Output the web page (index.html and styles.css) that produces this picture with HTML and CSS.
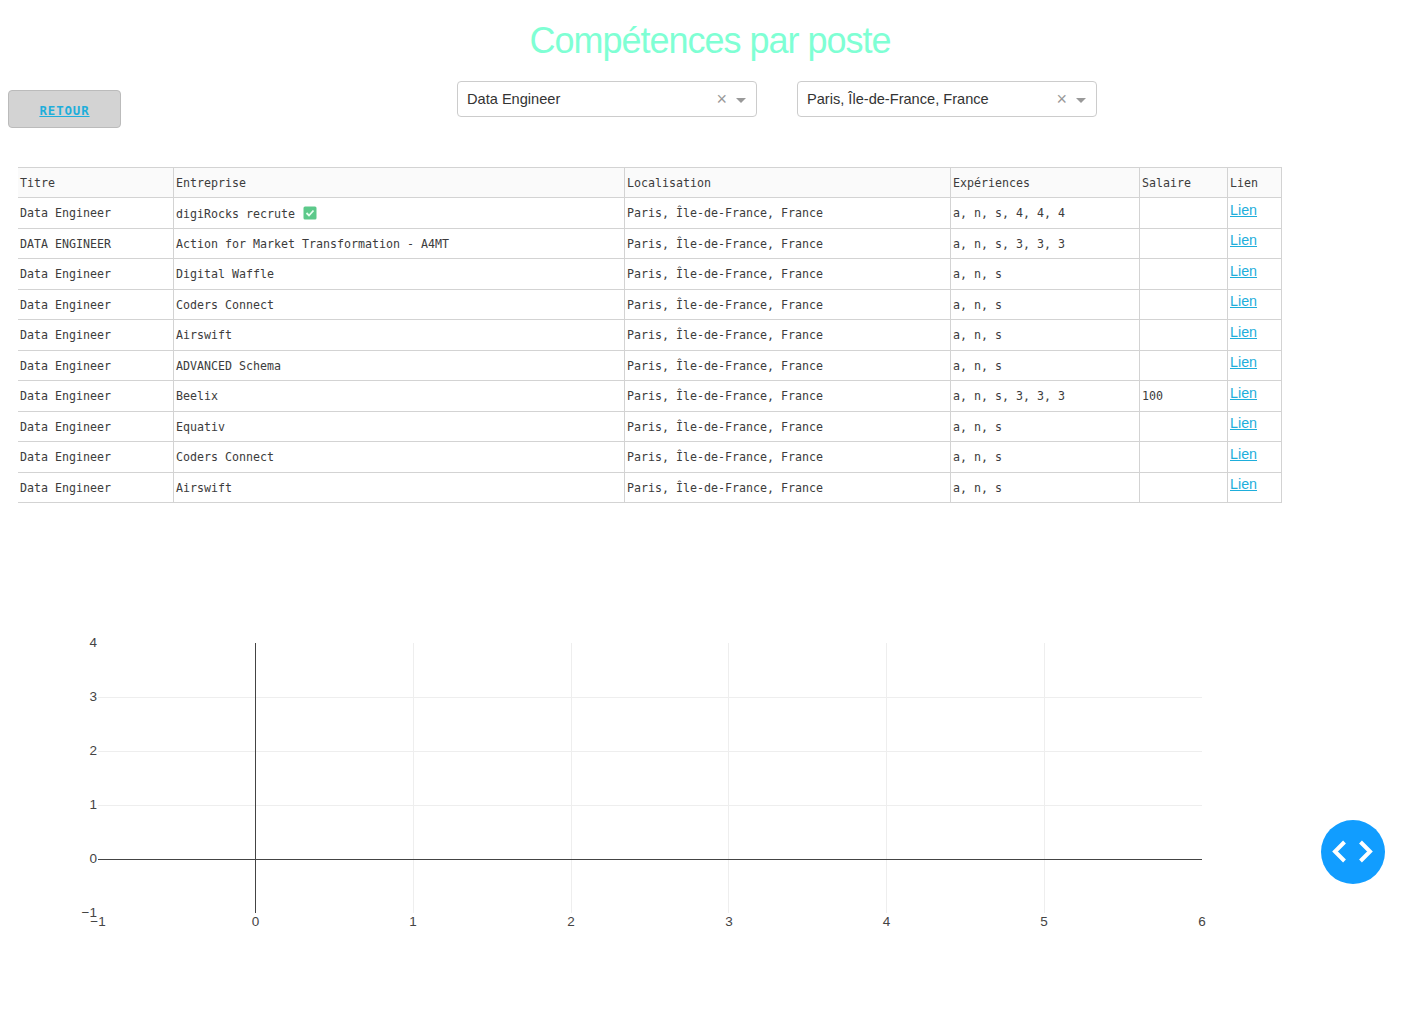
FILE: index.html
```html
<!DOCTYPE html>
<html lang="fr">
<head>
<meta charset="utf-8">
<title>Compétences par poste</title>
<link rel="stylesheet" href="styles.css">
</head>
<body>
<h1 class="title">Compétences par poste</h1>
<div class="controls">
  <a class="back" href="#">RETOUR</a>
  <div class="select select-first"><span class="select-value">Data Engineer</span><span class="clear">×</span><span class="caret"></span></div>
  <div class="select select-second"><span class="select-value">Paris, Île-de-France, France</span><span class="clear">×</span><span class="caret"></span></div>
</div>
<table class="jobs">
  <colgroup><col class="c1"><col class="c2"><col class="c3"><col class="c4"><col class="c5"><col class="c6"></colgroup>
  <thead><tr><th>Titre</th><th>Entreprise</th><th>Localisation</th><th>Expériences</th><th>Salaire</th><th>Lien</th></tr></thead>
  <tbody>
    <tr><td>Data Engineer</td><td>digiRocks recrute <svg class="check" viewBox="0 0 14 14" width="14" height="14"><rect width="13" height="13" x="0.5" y="0.5" rx="1.5" fill="#5cc98a"/><path d="M3.5 7l2.5 2.5 4.5-5" fill="none" stroke="#e8fff0" stroke-width="1.8"/></svg></td><td>Paris, Île-de-France, France</td><td>a, n, s, 4, 4, 4</td><td></td><td><a href="#">Lien</a></td></tr>
    <tr><td>DATA ENGINEER</td><td>Action for Market Transformation - A4MT</td><td>Paris, Île-de-France, France</td><td>a, n, s, 3, 3, 3</td><td></td><td><a href="#">Lien</a></td></tr>
    <tr><td>Data Engineer</td><td>Digital Waffle</td><td>Paris, Île-de-France, France</td><td>a, n, s</td><td></td><td><a href="#">Lien</a></td></tr>
    <tr><td>Data Engineer</td><td>Coders Connect</td><td>Paris, Île-de-France, France</td><td>a, n, s</td><td></td><td><a href="#">Lien</a></td></tr>
    <tr><td>Data Engineer</td><td>Airswift</td><td>Paris, Île-de-France, France</td><td>a, n, s</td><td></td><td><a href="#">Lien</a></td></tr>
    <tr><td>Data Engineer</td><td>ADVANCED Schema</td><td>Paris, Île-de-France, France</td><td>a, n, s</td><td></td><td><a href="#">Lien</a></td></tr>
    <tr><td>Data Engineer</td><td>Beelix</td><td>Paris, Île-de-France, France</td><td>a, n, s, 3, 3, 3</td><td>100</td><td><a href="#">Lien</a></td></tr>
    <tr><td>Data Engineer</td><td>Equativ</td><td>Paris, Île-de-France, France</td><td>a, n, s</td><td></td><td><a href="#">Lien</a></td></tr>
    <tr><td>Data Engineer</td><td>Coders Connect</td><td>Paris, Île-de-France, France</td><td>a, n, s</td><td></td><td><a href="#">Lien</a></td></tr>
    <tr><td>Data Engineer</td><td>Airswift</td><td>Paris, Île-de-France, France</td><td>a, n, s</td><td></td><td><a href="#">Lien</a></td></tr>
  </tbody>
</table>
<div class="chart">
  <svg class="plot" width="1420" height="420" viewBox="0 603 1420 420">
    <g class="grid">
      <path d="M413.5 643V913M571.5 643V913M728.5 643V913M886.5 643V913M1044.5 643V913"/>
      <path d="M98 697.5H1202M98 751.5H1202M98 805.5H1202"/>
    </g>
    <g class="zero">
      <path d="M255.5 643V913"/>
      <path d="M98 859.5H1202"/>
    </g>
    <g class="ticks">
      <text x="97" y="647" text-anchor="end">4</text>
      <text x="97" y="701" text-anchor="end">3</text>
      <text x="97" y="755" text-anchor="end">2</text>
      <text x="97" y="809" text-anchor="end">1</text>
      <text x="97" y="863" text-anchor="end">0</text>
      <text x="97" y="917" text-anchor="end">−1</text>
      <text x="98" y="926" text-anchor="middle">−1</text>
      <text x="255.5" y="926" text-anchor="middle">0</text>
      <text x="413" y="926" text-anchor="middle">1</text>
      <text x="571" y="926" text-anchor="middle">2</text>
      <text x="729" y="926" text-anchor="middle">3</text>
      <text x="886.5" y="926" text-anchor="middle">4</text>
      <text x="1044" y="926" text-anchor="middle">5</text>
      <text x="1202" y="926" text-anchor="middle">6</text>
    </g>
  </svg>
  <button class="fab" type="button" aria-label="Code">
    <svg viewBox="0 0 64 64" width="64" height="64"><path d="M23.5 22L14 31.5 23.5 41M39.5 22L49 31.5 39.5 41" fill="none" stroke="#fff" stroke-width="4"/></svg>
  </button>
</div>
</body>
</html>
```
FILE: styles.css
```css
html, body { margin: 0; padding: 0; background: #fff; }
body { height: 1023px; overflow: hidden; font-family: "Liberation Sans", Arial, sans-serif; }
.title {
  margin: 0;
  padding-top: 18px;
  height: 81px;
  box-sizing: border-box;
  text-align: center;
  font-size: 36px;
  line-height: 45px;
  font-weight: 400;
  letter-spacing: -1px;
  color: #7fffd4;
}
.controls { display: flex; align-items: flex-start; padding-left: 8px; height: 86px; }
.back {
  box-sizing: border-box;
  width: 113px;
  height: 38px;
  margin-top: 9px;
  padding-top: 6px;
  background: #d3d3d3;
  border: 1px solid #bbb;
  border-radius: 4px;
  color: #1eaedb;
  font: bold 12.4px/28px "DejaVu Sans Mono", monospace;
  letter-spacing: 0.9px;
  text-align: center;
  text-decoration: underline;
}
.select {
  box-sizing: border-box;
  width: 300px;
  height: 36px;
  display: flex;
  align-items: center;
  padding: 0 10px 0 9px;
  background: #fff;
  border: 1px solid #ccc;
  border-radius: 4px;
  color: #333;
  font-size: 14.6px;
}
.select-first { margin-left: 336px; }
.select-second { margin-left: 40px; }
.select-value { flex: 1; }
.clear { color: #999; font-size: 18px; line-height: 1; margin-right: 9px; }
.caret { width: 0; height: 0; border: 5px solid transparent; border-top-color: #999; border-bottom: 0; margin-top: 2px; }
.jobs {
  margin-left: 18px;
  width: 1263px;
  table-layout: fixed;
  border-collapse: collapse;
  font: 11.63px "DejaVu Sans Mono", monospace;
  color: #3c3c3c;
}
.c1 { width: 155px; } .c2 { width: 451px; } .c3 { width: 326px; } .c4 { width: 189px; } .c5 { width: 88px; } .c6 { width: 54px; }
.jobs th, .jobs td {
  box-sizing: border-box;
  height: 30.5px;
  padding: 3px 2px 2px 2.5px;
  border: 1px solid #d3d3d3;
  text-align: left;
  font-weight: 400;
  white-space: nowrap;
  vertical-align: middle;
}
.jobs th { background: #fafafa; height: 30px; }
.jobs tr > :first-child { border-left: 0; padding-left: 2px; }
.jobs a { font: 14.3px "Liberation Sans", Arial, sans-serif; color: #1eaedb; position: relative; top: -3.5px; }
.check { vertical-align: -2px; margin-left: 1px; }
.chart { position: relative; height: 420px; margin-top: 100px; }
.plot { display: block; }
.grid path { stroke: #eee; stroke-width: 1; fill: none; }
.zero path { stroke: #444; stroke-width: 1; fill: none; }
.ticks text { font: 13.5px "Liberation Sans", sans-serif; fill: #444; }
.fab { position: absolute; left: 1321px; top: 217px; width: 64px; height: 64px; padding: 0; border: 0; border-radius: 50%; background: #119dff; }
.fab svg { display: block; }
```
